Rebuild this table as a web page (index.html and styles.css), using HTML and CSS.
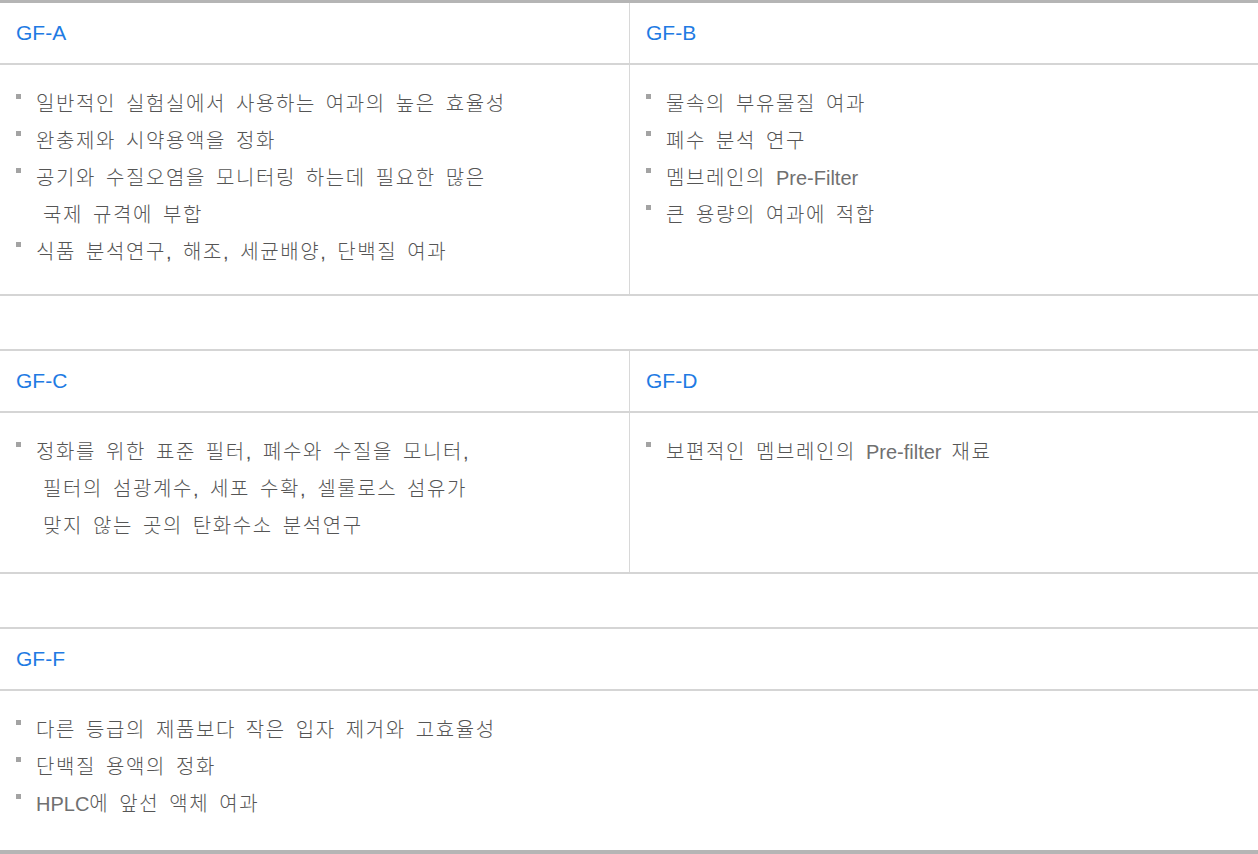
FILE: index.html
```html
<!DOCTYPE html>
<html lang="ko">
<head>
<meta charset="utf-8">
<title>GF 필터</title>
<link rel="stylesheet" href="styles.css">
</head>
<body>
<div class="specs">
  <section class="spec spec--first">
    <div class="spec__row spec__row--head">
      <div class="spec__cell"><h3 class="spec__title">GF-A</h3></div>
      <div class="spec__cell spec__cell--right"><h3 class="spec__title">GF-B</h3></div>
    </div>
    <div class="spec__row spec__row--body">
      <div class="spec__cell">
        <ul class="bullets">
          <li>일반적인 실험실에서 사용하는 여과의 높은 효율성</li>
          <li>완충제와 시약용액을 정화</li>
          <li>공기와 수질오염을 모니터링 하는데 필요한 많은<span class="cont">국제 규격에 부합</span></li>
          <li>식품 분석연구, 해조, 세균배양, 단백질 여과</li>
        </ul>
      </div>
      <div class="spec__cell spec__cell--right">
        <ul class="bullets">
          <li>물속의 부유물질 여과</li>
          <li>폐수 분석 연구</li>
          <li>멤브레인의 <span class="lat">Pre-Filter</span></li>
          <li>큰 용량의 여과에 적합</li>
        </ul>
      </div>
    </div>
  </section>

  <section class="spec">
    <div class="spec__row spec__row--head">
      <div class="spec__cell"><h3 class="spec__title">GF-C</h3></div>
      <div class="spec__cell spec__cell--right"><h3 class="spec__title">GF-D</h3></div>
    </div>
    <div class="spec__row spec__row--body">
      <div class="spec__cell">
        <ul class="bullets">
          <li>정화를 위한 표준 필터, 폐수와 수질을 모니터,<span class="cont">필터의 섬광계수, 세포 수확, 셀룰로스 섬유가</span><span class="cont">맞지 않는 곳의 탄화수소 분석연구</span></li>
        </ul>
      </div>
      <div class="spec__cell spec__cell--right">
        <ul class="bullets">
          <li>보편적인 멤브레인의 <span class="lat">Pre-filter</span> 재료</li>
        </ul>
      </div>
    </div>
  </section>

  <section class="spec spec--last spec--single">
    <div class="spec__row spec__row--head">
      <div class="spec__cell"><h3 class="spec__title">GF-F</h3></div>
    </div>
    <div class="spec__row spec__row--body">
      <div class="spec__cell">
        <ul class="bullets">
          <li>다른 등급의 제품보다 작은 입자 제거와 고효율성</li>
          <li>단백질 용액의 정화</li>
          <li><span class="lat">HPLC</span>에 앞선 액체 여과</li>
        </ul>
      </div>
    </div>
  </section>
</div>
</body>
</html>
```

FILE: styles.css
```css
* { box-sizing: border-box; }

html, body {
  margin: 0;
  padding: 0;
  background: #fff;
}

body {
  font-family: "Liberation Sans", "Noto Sans CJK KR", sans-serif;
  color: #555;
  width: 1258px;
}

.specs {
  display: flex;
  flex-direction: column;
  gap: 53px;
}

.spec {
  border-top: 2px solid #d5d5d5;
  border-bottom: 2px solid #d5d5d5;
}

.spec--first {
  border-top: 3px solid #b5b5b5;
}

.spec--last {
  border-bottom: 4px solid #b5b5b5;
}

.spec__row {
  display: grid;
  grid-template-columns: 629px 1fr;
}

.spec--single .spec__row {
  grid-template-columns: 1fr;
}

.spec__row--head {
  height: 62px;
  border-bottom: 2px solid #d5d5d5;
}

.spec__row--body {
  min-height: 159px;
}

.spec__cell {
  padding: 0 16px;
}

.spec__cell--right {
  border-left: 1px solid #d8d8d8;
}

.spec__row--head .spec__cell {
  display: flex;
  align-items: center;
}

.spec__title {
  margin: 0;
  font-weight: normal;
  font-size: 21px;
  color: #1f7be3;
}

.bullets {
  list-style: none;
  margin: 0;
  padding: 21px 0 23px;
}

.bullets li {
  position: relative;
  padding-left: 20px;
  font-size: 20px;
  font-weight: 300;
  line-height: 37px;
  letter-spacing: 1.6px;
  word-spacing: 2.8px;
  white-space: nowrap;
}

.bullets li::before {
  content: "";
  position: absolute;
  left: 0;
  top: 8px;
  width: 5px;
  height: 5px;
  background: #a3a3a3;
}

.lat {
  letter-spacing: 0;
  color: #707070;
}

.cont {
  display: block;
  padding-left: 7px;
}
```
